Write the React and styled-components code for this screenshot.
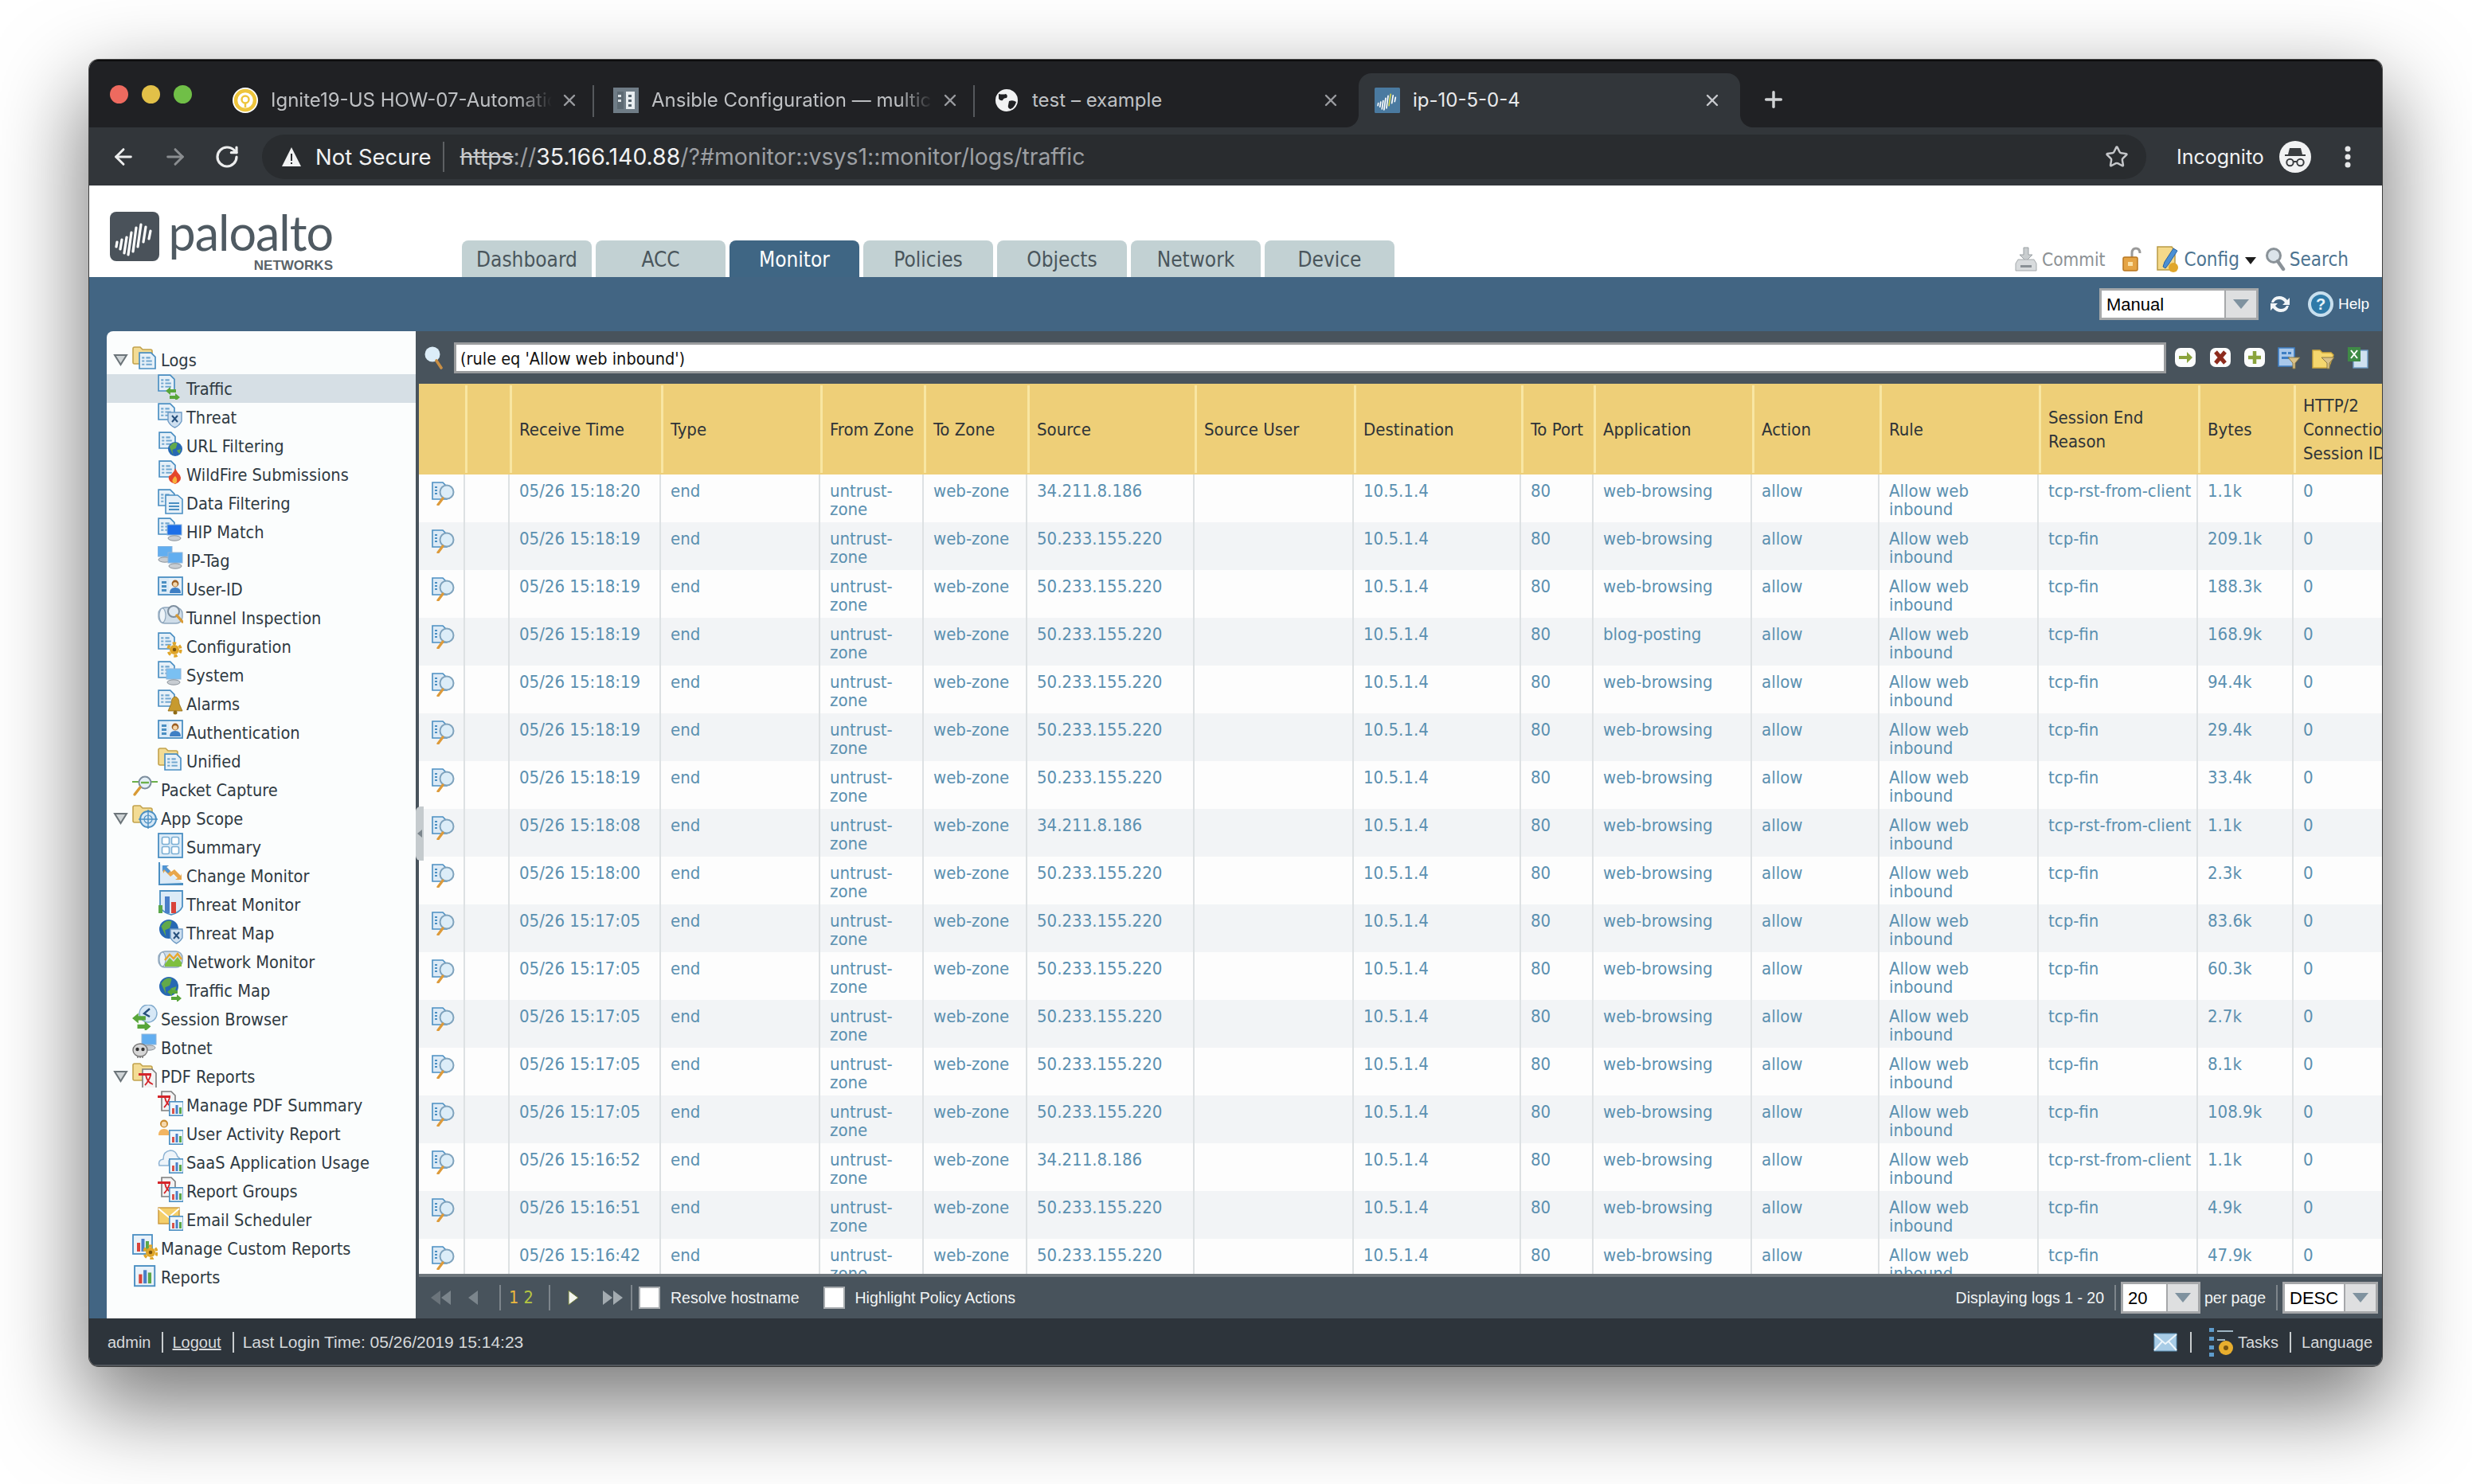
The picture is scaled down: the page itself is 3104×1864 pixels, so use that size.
import React from "react";
import styled, { createGlobalStyle } from "styled-components";
import { ArrowLeft, ArrowRight, RotateCw, X, Star, Plus } from "lucide-react";

const UI = '"DejaVu Sans Condensed", "DejaVu Sans", sans-serif';
const CHROME = 'Inter, "Liberation Sans", sans-serif';
const LABEL = '"Liberation Sans", Arial, sans-serif';

const Global = createGlobalStyle`
  html, body { margin: 0; padding: 0; background: #fff; }
  * { box-sizing: border-box; }
  body { font-family: ${UI}; }
`;

const Page = styled.div`
  width: 3104px;
  height: 1864px;
  padding: 75px 0 0 112px;
  overflow: hidden;
  background: #fff;
`;
const Win = styled.div`
  width: 2879px;
  height: 1641px;
  display: flex;
  flex-direction: column;
  border-radius: 12px;
  overflow: hidden;
  box-shadow: 0 0 0 1px rgba(20, 20, 20, 0.75), 0 44px 110px 8px rgba(0, 0, 0, 0.52);
`;

/* ---------- browser chrome ---------- */
const TabStrip = styled.div`
  height: 85px;
  flex: none;
  background: #202124;
  border-top: 2px solid #0c0c0d;
  display: flex;
  align-items: flex-end;
  padding-left: 26px;
`;
const Lights = styled.div`
  display: flex;
  gap: 17px;
  width: 134px;
  align-self: flex-start;
  margin-top: 30px;
`;
const Light = styled.span`
  width: 23px;
  height: 23px;
  border-radius: 50%;
  background: ${(p) => p.$c};
`;
const Tab = styled.div`
  position: relative;
  width: ${(p) => p.$w || 478}px;
  height: 68px;
  flex: none;
  display: flex;
  align-items: center;
  padding: 0 23px 0 20px;
  color: ${(p) => (p.$active ? "#e9eaec" : "#bfc1c4")};
  font: 400 24px/32px ${CHROME};
  background: ${(p) => (p.$active ? "#32363a" : "transparent")};
  border-radius: 16px 16px 0 0;
  &::after {
    content: "";
    position: absolute;
    display: ${(p) => (p.$sep ? "block" : "none")};
    right: 4px;
    top: 15px;
    bottom: 13px;
    width: 2px;
    background: #55585c;
  }
`;
const Flare = styled.span`
  position: absolute;
  bottom: 0;
  width: 16px;
  height: 16px;
  ${(p) =>
    p.$side === "left"
      ? "left:-16px;background:radial-gradient(circle at 0 0,transparent 15.5px,#32363a 16.5px);"
      : "right:-16px;background:radial-gradient(circle at 100% 0,transparent 15.5px,#32363a 16.5px);"}
`;
const TabTitle = styled.span`
  margin-left: 16px;
  flex: 1;
  min-width: 0;
  white-space: nowrap;
  overflow: hidden;
  ${(p) =>
    p.$fade &&
    `-webkit-mask-image: linear-gradient(90deg,#000 88%,transparent 100%);mask-image: linear-gradient(90deg,#000 88%,transparent 100%);`}
`;
const TabClose = styled.span`
  margin-left: 10px;
  display: flex;
  color: ${(p) => (p.$active ? "#c8cacd" : "#9a9ca0")};
`;
const NewTab = styled.span`
  display: flex;
  margin: 0 0 19px 26px;
  color: #d0d2d4;
`;
const Toolbar = styled.div`
  height: 73px;
  flex: none;
  background: #32363a;
  display: flex;
  align-items: center;
  padding-left: 27px;
`;
const NavBtn = styled.span`
  width: 32px;
  margin-right: ${(p) => p.$mr ?? 33}px;
  display: flex;
  justify-content: center;
  color: ${(p) => (p.$dim ? "#8a8d90" : "#eceded")};
`;
const Omni = styled.div`
  width: 2366px;
  height: 56px;
  background: #292c2f;
  border-radius: 28px;
  display: flex;
  align-items: center;
  padding: 0 22px 0 24px;
  flex: none;
  font: 400 27.5px/32px ${CHROME};
`;
const NotSecure = styled.span`
  color: #f1f2f3;
  margin-left: 17px;
  white-space: nowrap;
`;
const OmniSep = styled.span`
  width: 2px;
  height: 38px;
  background: #5d6063;
  margin: 0 20px 0 14px;
`;
const Url = styled.span`
  flex: 1;
  color: #9c9fa3;
  white-space: nowrap;
  font-size: 28.4px;
`;
const Scheme = styled.span`
  color: #c8cacc;
  text-decoration: line-through;
`;
const Host = styled.span`
  color: #f1f2f3;
`;
const Incog = styled.span`
  margin-left: 38px;
  color: #f1f2f3;
  font: 400 25px/32px ${CHROME};
`;
const IncogIcon = styled.svg`
  margin-left: 19px;
  width: 40px;
  height: 40px;
`;
const Dots = styled.svg`
  margin-left: 42px;
  width: 8px;
  height: 28px;
`;

/* ---------- app header ---------- */
const AppHead = styled.div`
  height: 115px;
  flex: none;
  background: #fff;
  display: flex;
  align-items: flex-end;
  padding: 0 42px 0 26px;
`;
const Logo = styled.div`
  width: 442px;
  height: 100%;
  flex: none;
  display: flex;
  padding-top: 33px;
`;
const LogoWords = styled.div`
  margin-left: 14px;
  display: flex;
  flex-direction: column;
  align-items: flex-end;
  width: 204px;
`;
const LogoName = styled.span`
  font: 400 61px/52px Lato, "Open Sans", sans-serif;
  color: #4f5a62;
  letter-spacing: -1px;
`;
const LogoSub = styled.span`
  font: 700 17px/14px ${LABEL};
  color: #5a6369;
  margin-top: 9px;
`;
const NavTabs = styled.div`
  display: flex;
  gap: 5px;
`;
const NavTab = styled.div`
  width: 163px;
  height: 46px;
  border-radius: 8px 8px 0 0;
  background: ${(p) => (p.$active ? "#3f6684" : "#c2d1d3")};
  color: ${(p) => (p.$active ? "#fff" : "#4a565c")};
  font: 400 26px/48px ${UI};
  text-align: center;
`;
const HeadTools = styled.div`
  margin-left: auto;
  height: 46px;
  padding-top: 2px;
  display: flex;
  align-items: center;
`;
const HeadLink = styled.span`
  font: 400 ${(p) => p.$size || 24}px/30px ${UI};
  color: ${(p) => p.$c};
  margin-left: ${(p) => p.$ml || 0}px;
`;
const ToolIcon = styled.svg`
  flex: none;
  margin-left: ${(p) => p.$ml || 0}px;
  margin-right: ${(p) => p.$mr || 0}px;
`;
const Caret = styled.span`
  margin: 2px 0 0 7px;
  border-left: 7px solid transparent;
  border-right: 7px solid transparent;
  border-top: 9px solid #1c1c1c;
`;

/* ---------- blue bar ---------- */
const BlueBar = styled.div`
  height: 68px;
  flex: none;
  background: #426583;
  display: flex;
  align-items: center;
  justify-content: flex-end;
  padding-right: 16px;
`;
const SelectBox = styled.div`
  width: ${(p) => p.$w}px;
  height: 40px;
  margin-left: ${(p) => p.$ml || 0}px;
  flex: none;
  display: flex;
  background: #dedfe0;
  border: 3px solid #a6a8aa;
`;
const SelectValue = styled.span`
  flex: 1;
  background: #fff;
  color: #000;
  font: 400 22px/36px ${LABEL};
  padding-left: 6px;
  border-right: 2px solid #a6a8aa;
`;
const SelectArrow = styled.span`
  width: ${(p) => p.$w || 38}px;
  display: flex;
  align-items: center;
  justify-content: center;
  &::before {
    content: "";
    border-left: 10px solid transparent;
    border-right: 10px solid transparent;
    border-top: 12px solid #7f929f;
  }
`;
const HelpText = styled.span`
  color: #fff;
  font: 400 19px/28px ${LABEL};
  margin-left: 5px;
`;

/* ---------- body ---------- */
const Body = styled.div`
  position: relative;
  flex: 1;
  min-height: 0;
  display: flex;
  background: #426583;
  padding-left: 22px;
`;
const Side = styled.nav`
  width: 388px;
  flex: none;
  background: #fbfdfd;
  border-top-left-radius: 8px;
  padding-top: 18px;
  overflow: hidden;
`;
const TreeRow = styled.div`
  height: 36px;
  display: flex;
  align-items: flex-start;
  padding-left: ${(p) => (p.$child ? 64 : 8)}px;
  background: ${(p) => (p.$selected ? "#d6dfe5" : "transparent")};
`;
const Toggle = styled.svg`
  width: 24px;
  height: 36px;
  flex: none;
`;
const TreeIcon = styled.svg`
  width: 32px;
  height: 32px;
  flex: none;
`;
const TreeLabel = styled.span`
  margin-left: 4px;
  font: 400 21.6px/37px ${UI};
  color: #2f3a42;
  white-space: nowrap;
`;
const Main = styled.main`
  flex: 1;
  min-width: 0;
  border-left: 4px solid #48535c;
  display: flex;
  flex-direction: column;
  background: #fff;
`;
const Handle = styled.div`
  position: absolute;
  left: 410px;
  top: 597px;
  width: 10px;
  height: 68px;
  border-radius: 6px 0 0 6px;
  background: #c5cbce;
  display: flex;
  align-items: center;
  justify-content: center;
  &::before {
    content: "";
    border-top: 5px solid transparent;
    border-bottom: 5px solid transparent;
    border-right: 6px solid #7b858c;
  }
`;
const FilterBar = styled.div`
  height: 66px;
  flex: none;
  background: #48535c;
  display: flex;
  align-items: center;
  padding-left: 7px;
`;
const FilterInput = styled.div`
  width: 2150px;
  height: 39px;
  margin: 0 9px 0 13px;
  flex: none;
  background: #fff;
  border: 3px solid #9a9c9e;
  color: #111;
  font: 400 21.5px/35px ${UI};
  padding-left: 5px;
`;
const FilterBtn = styled.svg`
  width: 30px;
  height: 30px;
  flex: none;
  margin-left: ${(p) => p.$ml || 0}px;
`;
const TableWrap = styled.div`
  flex: 1;
  min-height: 0;
  overflow: hidden;
`;
const COLS = "58px 56px 190px 200px 130px 130px 210px 200px 210px 91px 199px 160px 200px 200px 120px 120px";
const HeadRow = styled.div`
  display: grid;
  grid-template-columns: ${COLS};
  height: 114px;
  background: #eecf78;
`;
const HeadCell = styled.div`
  position: relative;
  display: flex;
  align-items: center;
  padding: 2px 0 0 12px;
  font: 400 22px/30px ${UI};
  color: #2e3438;
  white-space: pre-line;
  &::after {
    content: "";
    position: absolute;
    right: -3px;
    top: 2px;
    bottom: 2px;
    width: 3px;
    background: #f8e6a2;
  }
`;
const DataRow = styled.div`
  display: grid;
  grid-template-columns: ${COLS};
  height: 60px;
  background: ${(p) => (p.$even ? "#f2f4f6" : "#fdfdfd")};
`;
const Cell = styled.div`
  padding: 9px 6px 0 12px;
  font: 400 22px/23px ${UI};
  color: #5b90b0;
  border-right: 2px solid #dde1e3;
  overflow: hidden;
`;
const IconCell = styled(Cell)`
  padding: 9px 0 0 16px;
`;
const DetailIcon = styled.svg`
  width: 30px;
  height: 30px;
  display: block;
`;
const Pager = styled.div`
  height: 56px;
  flex: none;
  background: #48535c;
  border-top: 4px solid #6f777d;
  display: flex;
  align-items: center;
  padding: 0 5px 0 8px;
  color: #f1f3f4;
  font: 400 19.5px/28px ${LABEL};
`;
const PageBtn = styled.svg`
  width: ${(p) => p.$w}px;
  height: 30px;
  flex: none;
`;
const PagerSep = styled.span`
  width: 2px;
  height: 32px;
  flex: none;
  background: #7d858b;
  margin-left: ${(p) => p.$ml || 0}px;
`;
const PageNums = styled.span`
  width: 60px;
  padding-left: 10px;
  font: 400 21.5px/28px ${UI};
  white-space: nowrap;
  flex: none;
`;
const Num = styled.span`
  color: ${(p) => p.$c};
`;
const Check = styled.span`
  width: 27px;
  height: 28px;
  flex: none;
  background: #fff;
  border: 2px solid #a9adb0;
  margin-left: ${(p) => p.$ml}px;
  margin-right: 13px;
`;
const PagerRight = styled.div`
  margin-left: auto;
  display: flex;
  align-items: center;
`;
const PagerText = styled.span`
  margin-left: ${(p) => p.$ml || 0}px;
  margin-right: ${(p) => p.$mr || 0}px;
  white-space: nowrap;
`;

/* ---------- footer ---------- */
const Foot = styled.footer`
  height: 60px;
  flex: none;
  background: #2d343b;
  border-bottom: 2px solid #52575c;
  display: flex;
  align-items: center;
  padding: 2px 12px 0 23px;
  color: #d6d9db;
  font: 400 20px/28px ${LABEL};
`;
const FootSep = styled.span`
  width: 2px;
  height: 26px;
  background: #c8ccce;
  flex: none;
  margin: 0 ${(p) => p.$r ?? 11}px 0 ${(p) => p.$l ?? 14}px;
`;
const FootLink = styled.span`
  text-decoration: underline;
`;
const LastLogin = styled.span`
  font-size: 21px;
`;
const FootRight = styled.div`
  margin-left: auto;
  display: flex;
  align-items: center;
`;

/* ---------- drawings ---------- */
const LogoMark = ({ size = 62, bg = "#4a525a", accent = "#fff", radius = 8 }) => {
  const lines = [
    [9, 38, 8, 44],
    [15, 35, 13, 47],
    [21, 32, 18, 52],
    [27, 26, 23, 54],
    [33, 20, 29, 50],
    [39, 16, 35, 44],
    [45, 19, 42, 38],
    [51, 24, 49, 34],
  ];
  return (
    <svg width={size} height={size} viewBox="0 0 62 62" style={{ flex: "none" }}>
      <rect width="62" height="62" rx={radius} fill={bg} />
      {lines.map((l, i) => (
        <line key={i} x1={l[0]} y1={l[1]} x2={l[2]} y2={l[3]} stroke={i === 5 && accent !== "#fff" ? accent : "#fff"} strokeWidth="3.2" strokeLinecap="round" />
      ))}
    </svg>
  );
};

const Bars = ({ x = 0, y = 0, s = 1, frame = true }) => (
  <g transform={`translate(${x} ${y}) scale(${s})`}>
    {frame && <rect x=".8" y=".8" width="17.4" height="17.4" fill="#eef6fb" stroke="#4b8fc2" strokeWidth="1.6" />}
    <rect x="4" y="9" width="3" height="7" fill="#d9534a" />
    <rect x="8.5" y="5" width="3" height="11" fill="#4a7fc9" />
    <rect x="13" y="8" width="3" height="8" fill="#5aa84a" />
  </g>
);
const Doc = ({ x = 0, y = 0, s = 1, accent = "#4b8fc2" }) => (
  <g transform={`translate(${x} ${y}) scale(${s})`}>
    <path d="M1 1h14l5 5v14H1z" fill="#e6f0f8" stroke={accent} strokeWidth="1.6" />
    <path d="M4 6h3v2H4zM9 6h5v2H9zM4 10h3v2H4zM9 10h7v2H9zM4 14h3v2H4zM9 14h7v2H9z" fill={accent} opacity=".75" />
  </g>
);
const Folder = () => (
  <path d="M1 4q0-2 2-2h7l3 3h10q2 0 2 2v16H3q-2 0-2-2z" fill="#f3dc95" stroke="#c2a24c" strokeWidth="1.6" />
);
const Globe = ({ x, y, r }) => (
  <g>
    <circle cx={x} cy={y} r={r} fill="#2768b3" />
    <path d={`M${x - r * 0.8} ${y - r * 0.3}q${r * 0.5} ${-r * 0.8} ${r * 1.1} ${-r * 0.5}l${-r * 0.2} ${r * 0.7}l${-r * 0.5} ${r * 0.2}l${r * 0.1} ${r * 0.7}z`} fill="#62a94a" />
    <path d={`M${x + r * 0.2} ${y + r * 0.2}l${r * 0.6} ${-r * 0.2}l${-r * 0.2} ${r * 0.7}z`} fill="#62a94a" />
  </g>
);
const Gear = ({ x, y, r, c = "#e0a62a" }) => (
  <g>
    <circle cx={x} cy={y} r={r * 0.75} fill={c} />
    <circle cx={x} cy={y} r={r} fill="none" stroke={c} strokeWidth={r * 0.42} strokeDasharray={`${r * 0.55} ${r * 0.55}`} />
    <circle cx={x} cy={y} r={r * 0.28} fill="#7a5510" />
  </g>
);
const Arrows = ({ x = 0, y = 0 }) => (
  <g transform={`translate(${x} ${y})`} fill="#58a63a">
    <path d="M0 5l6-5v3h7v4H6v3z" />
    <path d="M18 13l-6-5v3H5v4h7v3z" />
  </g>
);
const Pdf = ({ x = 0, y = 0, s = 1 }) => (
  <g transform={`translate(${x} ${y}) scale(${s})`}>
    <path d="M5 1h12l5 5v19H5z" fill="#f3f3f3" stroke="#7c7c7c" strokeWidth="1.6" />
    <path d="M0 6h16v3H0z" fill="#d4252a" />
    <path d="M9 8c1 6 3 10 9 12M15 9c-2 6-4 9-7 12" fill="none" stroke="#d4252a" strokeWidth="1.8" />
  </g>
);
const Person = ({ x = 0, y = 0 }) => (
  <g transform={`translate(${x} ${y})`}>
    <circle cx="7" cy="5.5" r="5" fill="#c98b2f" />
    <circle cx="7" cy="6" r="3.2" fill="#f6d9ae" />
    <path d="M0 20q0-8 7-8t7 8z" fill="#f2b562" />
  </g>
);
const Card = () => (
  <g>
    <rect x="1" y="3" width="30" height="22" fill="#dcebf7" stroke="#4b8fc2" strokeWidth="1.8" />
    <path d="M5 8h6v3H5zM5 13h6v3H5zM5 18h6v3H5z" fill="#4b8fc2" />
    <path d="M14 4h16v20H14z" fill="#e8f1f8" />
    <circle cx="22" cy="11" r="4.4" fill="#9c5d20" />
    <circle cx="22" cy="12" r="2.8" fill="#f4d7ab" />
    <path d="M15 23q0-7 7-7t7 7z" fill="#3f7fc4" />
  </g>
);
const Pipe = () => (
  <g>
    <rect x="1" y="5" width="30" height="20" rx="8" fill="#cfdde9" stroke="#8fa7bd" strokeWidth="1.4" />
    <ellipse cx="6" cy="15" rx="4" ry="9" fill="#eef4f9" stroke="#8fa7bd" strokeWidth="1.2" />
  </g>
);
const Screen = ({ x = 0, y = 0, c = "#3f8fe8" }) => (
  <g transform={`translate(${x} ${y})`}>
    <rect x="0" y="0" width="18" height="13" fill={c} stroke="#8fb4d8" />
    <ellipse cx="9" cy="17" rx="8" ry="3.2" fill="#c8cdd2" stroke="#8a929a" />
  </g>
);
const Chart = ({ x = 0, y = 0, s = 1 }) => (
  <g transform={`translate(${x} ${y}) scale(${s})`}>
    <rect x="1" y="1" width="24" height="24" fill="#e9f2f9" stroke="#4b8fc2" strokeWidth="1.8" />
    <rect x="6" y="11" width="4" height="11" fill="#d9433a" />
    <rect x="11.5" y="6" width="4" height="16" fill="#4a7fc9" />
    <rect x="17" y="9" width="4" height="13" fill="#5aa84a" />
  </g>
);

const glyphs = {
  logs: <><Folder /><Doc x={8} y={8} s={1.05} /></>,
  traffic: <><Doc s={1.05} /><Arrows x={10} y={16} /></>,
  threat: <><Doc s={1.05} /><path d="M13 12h17v11q-3 6-8.500 8-5.500-2-8.500-8z" fill="#cfe0f0" stroke="#6d9ac4" strokeWidth="1.4" /><path d="M18 16l7 8M25 16l-7 8" stroke="#27507c" strokeWidth="2" /></>,
  url: <><Doc s={1.05} x={1} /><Globe x={22} y={22} r={9} /></>,
  wildfire: <><Doc s={1.05} x={1} /><path d="M22 10q2 5 6 9 4 7-6 11-10-3-8-10 3-1 4-3 3-3 4-7z" fill="#e4462c" /><path d="M22 20q4 4 1 9h-3q-4-4 2-9z" fill="#f7b23c" /></>,
  data: <><Doc s={1.05} /><path d="M10 8h15l6 5v18H10z" fill="#e6f0f8" stroke="#4b8fc2" strokeWidth="1.6" /><path d="M14 17h13v2H14zM14 21h13v2H14zM14 25h13v2H14z" fill="#4b8fc2" /></>,
  hip: <><Doc s={1.05} /><Screen x={12} y={9} c="#1d6fe8" /></>,
  iptag: <><Screen x={0} y={0} c="#62aef0" /><Screen x={13} y={8} c="#62aef0" /></>,
  user: <Card />,
  tunnel: <><Pipe /><circle cx="20" cy="10" r="7" fill="#dfe9f2" stroke="#7d8e9e" strokeWidth="2" /><path d="M24 15l7 8" stroke="#d89a35" strokeWidth="3.4" strokeLinecap="round" /></>,
  config: <><Doc s={1.05} /><Gear x={21} y={22} r={8} /></>,
  system: <><Doc s={1.05} /><Screen x={11} y={10} c="#7ac0f2" /></>,
  alarms: <><Doc s={1.05} /><path d="M22 9q5 1 5 9l4 9H13l4-9q0-8 5-9z" fill="#c79a2e" stroke="#8f6b17" strokeWidth=".8" /><circle cx="22" cy="29" r="2.500" fill="#8f6b17" /></>,
  unified: <><Folder /><Doc x={8} y={8} s={1.05} /></>,
  packet: <><path d="M0 8h32" stroke="#6bb04a" strokeWidth="2" /><circle cx="16" cy="9" r="7.500" fill="#e5f0f7" stroke="#7d8e9e" strokeWidth="2" /><path d="M11 9h10" stroke="#6bb04a" strokeWidth="2.400" /><path d="M10 15l-7 9" stroke="#d89a35" strokeWidth="3.400" strokeLinecap="round" /></>,
  appscope: <><Folder /><circle cx="20" cy="19" r="10" fill="#d6e8f6" stroke="#4b8fc2" strokeWidth="1.800" /><path d="M20 7v24M8 19h24" stroke="#4b8fc2" strokeWidth="1.400" /><circle cx="20" cy="19" r="5" fill="none" stroke="#4b8fc2" strokeWidth="1.200" /></>,
  summary: <><rect x="1" y="1" width="30" height="30" fill="#dcebf7" stroke="#4b8fc2" strokeWidth="1.800" /><rect x="5.500" y="5.500" width="9" height="9" rx="2" fill="#fff" stroke="#7aaed4" strokeWidth="1.600" /><rect x="17.500" y="5.500" width="9" height="9" rx="2" fill="#fff" stroke="#7aaed4" strokeWidth="1.600" /><rect x="5.500" y="17.500" width="9" height="9" rx="2" fill="#fff" stroke="#7aaed4" strokeWidth="1.600" /><rect x="17.500" y="17.500" width="9" height="9" rx="2" fill="#fff" stroke="#7aaed4" strokeWidth="1.600" /></>,
  change: <><path d="M1 1h2v26h29v3H1z" fill="#4b8fc2" /><path d="M3 28V3l28 24z" fill="#dcebf7" /><path d="M6 5h8l-3 2 6 6 4-3 8 8 1-3v8h-8l3-2-5-5-4 3-7-7-2 3z" fill="#e8a64a" /><path d="M6 5h8l-3 2 5 5-3 3-5-5-2 3z" fill="#4f94d4" /></>,
  threatmon: <><path d="M3 1h28v20q-3 7-14 10Q6 28 3 21z" fill="#dcebf7" stroke="#4b8fc2" strokeWidth="1.800" /><rect x="1" y="19" width="5" height="10" fill="#5aa84a" /><rect x="9" y="8" width="6" height="21" fill="#4a7fc9" /><rect x="17" y="15" width="6" height="14" fill="#d9433a" /></>,
  threatmap: <><Globe x={14} y={13} r={12} /><path d="M16 13h15v11q-3 5-7.500 7-4.500-2-7.500-7z" fill="#cfe0f0" stroke="#6d9ac4" strokeWidth="1.400" /><path d="M20 17l7 8M27 17l-7 8" stroke="#27507c" strokeWidth="2" /></>,
  netmon: <><Pipe /><path d="M9 21l6-8 5 5 5-6 5 7v5H9z" fill="#7fbf3f" /><path d="M9 16l6-7 5 5 5-6 5 7" fill="none" stroke="#e8a62a" strokeWidth="2.400" /></>,
  trafmap: <><Globe x={14} y={13} r={12} /><Arrows x={12} y={15} /></>,
  session: <><circle cx="20" cy="11" r="11" fill="#d7e8f6" stroke="#7fa9cc" strokeWidth="1.400" /><path d="M22 5l-7 6 7 4" fill="none" stroke="#27507c" strokeWidth="2.400" /><g transform="scale(1.3)"><Arrows x={0} y={8} /></g></>,
  botnet: <><Screen x={12} y={1} c="#62aef0" /><ellipse cx="10" cy="21" rx="9" ry="8" fill="#d6d6d6" stroke="#777" strokeWidth="1.400" /><circle cx="6.500" cy="20" r="2.200" fill="#333" /><circle cx="13.500" cy="20" r="2.200" fill="#333" /><path d="M7 28v3M10 28v3M13 28v3" stroke="#777" strokeWidth="1.500" /></>,
  pdf: <><Folder /><Pdf x={8} y={8} s={1} /></>,
  managepdf: <><Pdf s={1} /><Bars x={14} y={13} /></>,
  useract: <><Person x={1} y={0} /><Bars x={14} y={13} /></>,
  saas: <><path d="M2 22q-2-7 5-8 0-10 9-11 7 0 9 8 3 1 3 5H14v6z" fill="#eef4f9" stroke="#8fb4d4" strokeWidth="1.500" /><Bars x={14} y={13} /></>,
  groups: <><Pdf s={1} /><Bars x={14} y={13} /></>,
  email: <><rect x="1" y="3" width="26" height="20" fill="#f4cf6b" stroke="#c9963a" strokeWidth="1.400" /><path d="M1 4l13 11L27 4" fill="none" stroke="#fff" strokeWidth="2" /><Bars x={14} y={13} /></>,
  custom: <><Chart s={1} /><Gear x={23} y={23} r={8} /></>,
  reports: <Chart x={2} y={3} s={1.05} />,
};

const tree = [
  ["Logs", "logs", 0, 1],
  ["Traffic", "traffic", 1, 0, 1],
  ["Threat", "threat", 1],
  ["URL Filtering", "url", 1],
  ["WildFire Submissions", "wildfire", 1],
  ["Data Filtering", "data", 1],
  ["HIP Match", "hip", 1],
  ["IP-Tag", "iptag", 1],
  ["User-ID", "user", 1],
  ["Tunnel Inspection", "tunnel", 1],
  ["Configuration", "config", 1],
  ["System", "system", 1],
  ["Alarms", "alarms", 1],
  ["Authentication", "user", 1],
  ["Unified", "unified", 1],
  ["Packet Capture", "packet", 0],
  ["App Scope", "appscope", 0, 1],
  ["Summary", "summary", 1],
  ["Change Monitor", "change", 1],
  ["Threat Monitor", "threatmon", 1],
  ["Threat Map", "threatmap", 1],
  ["Network Monitor", "netmon", 1],
  ["Traffic Map", "trafmap", 1],
  ["Session Browser", "session", 0],
  ["Botnet", "botnet", 0],
  ["PDF Reports", "pdf", 0, 1],
  ["Manage PDF Summary", "managepdf", 1],
  ["User Activity Report", "useract", 1],
  ["SaaS Application Usage", "saas", 1],
  ["Report Groups", "groups", 1],
  ["Email Scheduler", "email", 1],
  ["Manage Custom Reports", "custom", 0],
  ["Reports", "reports", 0],
];

const A = "34.211.8.186";
const B = "50.233.155.220";
const R = "tcp-rst-from-client";
const F = "tcp-fin";
const W = "web-browsing";
const rows = [
  ["15:18:20", A, W, R, "1.1k"],
  ["15:18:19", B, W, F, "209.1k"],
  ["15:18:19", B, W, F, "188.3k"],
  ["15:18:19", B, "blog-posting", F, "168.9k"],
  ["15:18:19", B, W, F, "94.4k"],
  ["15:18:19", B, W, F, "29.4k"],
  ["15:18:19", B, W, F, "33.4k"],
  ["15:18:08", A, W, R, "1.1k"],
  ["15:18:00", B, W, F, "2.3k"],
  ["15:17:05", B, W, F, "83.6k"],
  ["15:17:05", B, W, F, "60.3k"],
  ["15:17:05", B, W, F, "2.7k"],
  ["15:17:05", B, W, F, "8.1k"],
  ["15:17:05", B, W, F, "108.9k"],
  ["15:16:52", A, W, R, "1.1k"],
  ["15:16:51", B, W, F, "4.9k"],
  ["15:16:42", B, W, F, "47.9k"],
];
const headers = ["", "", "Receive Time", "Type", "From Zone", "To Zone", "Source", "Source User", "Destination", "To Port", "Application", "Action", "Rule", "Session End\nReason", "Bytes", "HTTP/2\nConnection\nSession ID"];

const DetailGlyph = () => (
  <DetailIcon viewBox="0 0 30 30">
    <path d="M1 1h13l5 5v16H1z" fill="#dceaf6" stroke="#4b8fc2" strokeWidth="1.6" />
    <path d="M4 6h3v2H4zM4 10h3v2H4zM4 14h3v2H4z" fill="#4b8fc2" />
    <circle cx="19" cy="13" r="8.500" fill="#dcedf8" stroke="#7fa3bd" strokeWidth="2" />
    <path d="M14 21l-6 8" stroke="#dd9a3a" strokeWidth="3.200" strokeLinecap="round" />
  </DetailIcon>
);
const Tri = ({ dir = 1, c, x = 0 }) => (
  <path d={dir > 0 ? `M${x} 6l12 9-12 9z` : `M${x + 12} 6l-12 9 12 9z`} fill={c} />
);

export default function App() {
  return (
    <Page>
      <Global />
      <Win>
        <TabStrip>
          <Lights>
            <Light $c="#ee6a5f" />
            <Light $c="#e2c048" />
            <Light $c="#70bf47" />
          </Lights>
          <Tab $sep>
            <svg width="32" height="32" viewBox="0 0 32 32" style={{ flex: "none" }}>
              <circle cx="16" cy="16" r="16" fill="#fff" />
              <circle cx="16" cy="16" r="12" fill="none" stroke="#eec53c" strokeWidth="4.500" />
              <circle cx="16" cy="15" r="4.500" fill="none" stroke="#eec53c" strokeWidth="2.500" />
              <path d="M16 19v6" stroke="#eec53c" strokeWidth="2.500" />
            </svg>
            <TabTitle $fade>Ignite19-US HOW-07-Automation</TabTitle>
            <TabClose><X size={24} strokeWidth={2.4} /></TabClose>
          </Tab>
          <Tab $sep>
            <svg width="32" height="32" viewBox="0 0 32 32" style={{ flex: "none" }}>
              <rect width="32" height="32" fill="#6f7c86" />
              <rect x="5" y="5" width="8" height="22" fill="#5c6972" />
              <rect x="16" y="5" width="11" height="22" fill="#e8edf0" />
              <path d="M6 9h4v3H6zM6 15h4v3H6z" fill="#dfe4e8" />
              <path d="M19 9h4v3h-4zM19 15h4v3h-4zM19 21h4v3h-4z" fill="#56646e" />
            </svg>
            <TabTitle $fade>Ansible Configuration — multicloud</TabTitle>
            <TabClose><X size={24} strokeWidth={2.4} /></TabClose>
          </Tab>
          <Tab>
            <svg width="28" height="28" viewBox="0 0 28 28" style={{ flex: "none", margin: "0 2px" }}>
              <circle cx="14" cy="14" r="14" fill="#f1f2f3" />
              <path d="M4 6q6 1 9 0 3 2 1 5-4 0-5 3-3 1-5-2zM17 15q5-2 9 1-2 7-7 9-4-1-3-5z" fill="#202124" />
            </svg>
            <TabTitle>test – example</TabTitle>
            <TabClose><X size={24} strokeWidth={2.4} /></TabClose>
          </Tab>
          <Tab $active $w={479}>
            <Flare $side="left" />
            <Flare $side="right" />
            <LogoMark size={32} bg="#4a7aa0" accent="#d6d64a" radius={3} />
            <TabTitle>ip-10-5-0-4</TabTitle>
            <TabClose $active><X size={24} strokeWidth={2.4} /></TabClose>
          </Tab>
          <NewTab><Plus size={32} strokeWidth={2.6} /></NewTab>
        </TabStrip>

        <Toolbar>
          <NavBtn><ArrowLeft size={34} strokeWidth={2.2} /></NavBtn>
          <NavBtn $dim><ArrowRight size={34} strokeWidth={2.2} /></NavBtn>
          <NavBtn $mr={28}><RotateCw size={32} strokeWidth={2.4} /></NavBtn>
          <Omni>
            <svg width="26" height="26" viewBox="0 0 26 26" style={{ flex: "none" }}>
              <path d="M13 1l12 24H1z" fill="#f1f2f3" />
              <path d="M12 9h2v9h-2zM12 20h2v2h-2z" fill="#292c2f" />
            </svg>
            <NotSecure>Not Secure</NotSecure>
            <OmniSep />
            <Url>
              <Scheme>https</Scheme>://<Host>35.166.140.88</Host>/?#monitor::vsys1::monitor/logs/traffic
            </Url>
            <Star size={30} color="#c4c6c9" strokeWidth={2} />
          </Omni>
          <Incog>Incognito</Incog>
          <IncogIcon viewBox="0 0 40 40">
            <circle cx="20" cy="20" r="20" fill="#f1f2f3" />
            <path d="M13 9h14l2 8h4v2H7v-2h4z" fill="#3a3d40" />
            <circle cx="13.500" cy="27" r="4.200" fill="none" stroke="#3a3d40" strokeWidth="2" />
            <circle cx="26.500" cy="27" r="4.200" fill="none" stroke="#3a3d40" strokeWidth="2" />
            <path d="M17.500 26h5" stroke="#3a3d40" strokeWidth="2" />
          </IncogIcon>
          <Dots viewBox="0 0 8 28">
            <circle cx="4" cy="4" r="3.500" fill="#e6e7e8" />
            <circle cx="4" cy="14" r="3.500" fill="#e6e7e8" />
            <circle cx="4" cy="24" r="3.500" fill="#e6e7e8" />
          </Dots>
        </Toolbar>

        <AppHead>
          <Logo>
            <LogoMark size={62} />
            <LogoWords>
              <LogoName>paloalto</LogoName>
              <LogoSub>NETWORKS</LogoSub>
            </LogoWords>
          </Logo>
          <NavTabs>
            {["Dashboard", "ACC", "Monitor", "Policies", "Objects", "Network", "Device"].map((t) => (
              <NavTab key={t} $active={t === "Monitor"}>{t}</NavTab>
            ))}
          </NavTabs>
          <HeadTools>
            <ToolIcon width="28" height="32" viewBox="0 0 28 32" $mr={6}>
              <path d="M11 1h6v9h5l-8 8-8-8h5z" fill="#c9cdcf" stroke="#9aa0a4" />
              <path d="M4 16h20l3 5v9H1v-9z" fill="#d8dbdd" stroke="#a4a9ac" />
              <rect x="7" y="23" width="14" height="3" fill="#8a9095" />
            </ToolIcon>
            <HeadLink $c="#8c9194" $size={22.5}>Commit</HeadLink>
            <ToolIcon width="26" height="32" viewBox="0 0 26 32" $ml={20} $mr={3}>
              <path d="M13 14V8q0-6 5-6t5 6" fill="none" stroke="#9a9a9a" strokeWidth="3" />
              <rect x="2" y="13" width="18" height="17" rx="2" fill="#e5a445" stroke="#b8761f" strokeWidth="1.500" />
              <rect x="8" y="19" width="6" height="5" fill="#fbe2a8" />
            </ToolIcon>
            <ToolIcon width="30" height="36" viewBox="0 0 30 36" $ml={14} $mr={6}>
              <path d="M2 2h18l4 5v24H2z" fill="#f4d98a" stroke="#b99a45" strokeWidth="1.500" />
              <path d="M22 4l5 3-11 17-4 5-3-2 2-6z" fill="#4b8fd4" stroke="#2b629f" />
              <circle cx="22" cy="28" r="6" fill="#e0a62a" />
            </ToolIcon>
            <HeadLink $c="#4d7491">Config</HeadLink>
            <Caret />
            <ToolIcon width="26" height="34" viewBox="0 0 26 34" $ml={11} $mr={5}>
              <circle cx="11" cy="12" r="8.500" fill="#dbe4ea" stroke="#8a9298" strokeWidth="3" />
              <path d="M16 19l7 10" stroke="#8a9298" strokeWidth="4.500" strokeLinecap="round" />
            </ToolIcon>
            <HeadLink $c="#4d7491">Search</HeadLink>
          </HeadTools>
        </AppHead>

        <BlueBar>
          <SelectBox $w={200}>
            <SelectValue>Manual</SelectValue>
            <SelectArrow />
          </SelectBox>
          <ToolIcon width="28" height="26" viewBox="0 0 28 26" $ml={13}>
            <path d="M3 11q2-8 10-8 6 0 10 5l3-3v9h-9l3-3q-3-4-7-4-5 0-7 4zM25 15q-2 8-10 8-6 0-10-5l-3 3v-9h9l-3 3q3 4 7 4 5 0 7-4z" fill="#f2f6f8" />
          </ToolIcon>
          <ToolIcon width="34" height="34" viewBox="0 0 34 34" $ml={20}>
            <circle cx="17" cy="17" r="16" fill="#c8dfee" />
            <circle cx="17" cy="17" r="12" fill="#2f7aa8" />
            <text x="17" y="24" fontSize="20" fontWeight="700" fill="#e8f3f9" textAnchor="middle" fontFamily="Liberation Sans, sans-serif">?</text>
          </ToolIcon>
          <HelpText>Help</HelpText>
        </BlueBar>

        <Body>
          <Side>
            {tree.map(([label, icon, child, open, selected]) => (
              <TreeRow key={label} $child={child} $selected={selected}>
                {!child && (
                  <Toggle viewBox="0 0 24 36">
                    {open ? <path d="M2 12h15l-7.500 12z" fill="#cfd4d6" stroke="#6c757a" strokeWidth="2" /> : null}
                  </Toggle>
                )}
                <TreeIcon viewBox="0 0 32 32">{glyphs[icon]}</TreeIcon>
                <TreeLabel>{label}</TreeLabel>
              </TreeRow>
            ))}
          </Side>
          <Main>
            <FilterBar>
              <svg width="24" height="30" viewBox="0 0 24 30" style={{ flex: "none" }}>
                <circle cx="10" cy="11" r="9.500" fill="#dcedf8" />
                <path d="M15 19l6 9" stroke="#c98f45" strokeWidth="3.600" strokeLinecap="round" />
              </svg>
              <FilterInput>(rule eq 'Allow web inbound')</FilterInput>
              <FilterBtn viewBox="0 0 30 30">
                <rect x="2" y="3" width="26" height="24" rx="7" fill="#fbfcfc" />
                <path d="M7 13h10V8l7 7-7 7v-5H7z" fill="#8aa33c" />
              </FilterBtn>
              <FilterBtn viewBox="0 0 30 30" $ml={14}>
                <rect x="2" y="3" width="26" height="24" rx="7" fill="#fbfcfc" />
                <path d="M9 8l12 14M21 8L9 22" stroke="#8c2a1c" strokeWidth="5" />
              </FilterBtn>
              <FilterBtn viewBox="0 0 30 30" $ml={13}>
                <rect x="2" y="3" width="26" height="24" rx="7" fill="#fbfcfc" />
                <path d="M15 7v16M7 15h16" stroke="#8aa33c" strokeWidth="4.500" />
              </FilterBtn>
              <FilterBtn viewBox="0 0 30 30" $ml={13}>
                <path d="M2 3h20v23H2z" fill="#a9c8ea" stroke="#3f7fc4" strokeWidth="1.600" />
                <path d="M6 8h6v3H6zM14 8h4v3h-4zM6 14h10v3H6z" fill="#3f7fc4" />
                <path d="M14 15h15l-6 7v7h-3v-7z" fill="#d9c28a" stroke="#8c7a44" />
              </FilterBtn>
              <FilterBtn viewBox="0 0 30 30" $ml={13}>
                <path d="M2 6h9l3 3h11l3 3-6 16H2z" fill="#f5d76e" stroke="#d2ac3e" strokeWidth="1.400" />
                <path d="M13 15h16l-6 7v7h-3v-7z" fill="#d9c28a" stroke="#8c7a44" />
              </FilterBtn>
              <FilterBtn viewBox="0 0 30 30" $ml={13}>
                <rect x="10" y="6" width="18" height="22" fill="#cfe0f0" stroke="#6d9ac4" strokeWidth="1.400" />
                <rect x="3" y="2" width="16" height="18" fill="#3f8a46" />
                <path d="M7 6l8 10M15 6L7 16" stroke="#fff" strokeWidth="2" />
              </FilterBtn>
            </FilterBar>
            <TableWrap>
              <HeadRow>
                {headers.map((h, i) => <HeadCell key={i}>{h}</HeadCell>)}
              </HeadRow>
              {rows.map((r, i) => (
                <DataRow key={i} $even={i % 2 === 1}>
                  <IconCell><DetailGlyph /></IconCell>
                  <Cell />
                  <Cell>05/26 {r[0]}</Cell>
                  <Cell>end</Cell>
                  <Cell>untrust-zone</Cell>
                  <Cell>web-zone</Cell>
                  <Cell>{r[1]}</Cell>
                  <Cell />
                  <Cell>10.5.1.4</Cell>
                  <Cell>80</Cell>
                  <Cell>{r[2]}</Cell>
                  <Cell>allow</Cell>
                  <Cell>Allow web inbound</Cell>
                  <Cell>{r[3]}</Cell>
                  <Cell>{r[4]}</Cell>
                  <Cell>0</Cell>
                </DataRow>
              ))}
            </TableWrap>
            <Pager>
              <PageBtn $w={40} viewBox="0 0 40 30">
                <Tri dir={-1} c="#6b747b" x={7} />
                <Tri dir={-1} c="#7b858c" x={20} />
              </PageBtn>
              <PageBtn $w={40} viewBox="0 0 40 30"><Tri dir={-1} c="#7b858c" x={14} /></PageBtn>
              <PagerSep $ml={13} />
              <PageNums><Num $c="#eab83f">1</Num> <Num $c="#b5c641">2</Num></PageNums>
              <PagerSep />
              <PageBtn $w={58} viewBox="0 0 58 30">
                <path d="M23 6l12 9-12 9z" fill="#f3f5ef" stroke="#6d7a3a" strokeWidth="1" />
              </PageBtn>
              <PageBtn $w={38} viewBox="0 0 38 30">
                <Tri c="#a3abb0" x={8} />
                <Tri c="#a3abb0" x={21} />
              </PageBtn>
              <PagerSep $ml={5} />
              <Check $ml={8} />
              <PagerText $mr={30}>Resolve hostname</PagerText>
              <Check $ml={0} />
              <PagerText>Highlight Policy Actions</PagerText>
              <PagerRight>
                <PagerText>Displaying logs 1 - 20</PagerText>
                <PagerSep $ml={13} />
                <SelectBox $w={100} $ml={6}>
                  <SelectValue>20</SelectValue>
                  <SelectArrow />
                </SelectBox>
                <PagerText $ml={5}>per page</PagerText>
                <PagerSep $ml={13} />
                <SelectBox $w={120} $ml={6}>
                  <SelectValue>DESC</SelectValue>
                  <SelectArrow />
                </SelectBox>
              </PagerRight>
            </Pager>
          </Main>
          <Handle />
        </Body>

        <Foot>
          <span>admin</span>
          <FootSep />
          <FootLink>Logout</FootLink>
          <FootSep />
          <LastLogin>Last Login Time: 05/26/2019 15:14:23</LastLogin>
          <FootRight>
            <svg width="30" height="24" viewBox="0 0 30 24">
              <rect x="1" y="1" width="28" height="22" fill="#a8cce6" stroke="#5d8fb4" />
              <path d="M1 2l14 12L29 2M1 22l10-11M29 22L19 11" fill="none" stroke="#eef6fb" strokeWidth="2" />
            </svg>
            <FootSep $l={16} $r={21} />
            <svg width="34" height="38" viewBox="0 0 34 38" style={{ marginRight: 3 }}>
              <path d="M1 1h6v5H1zM1 12h6v5H1zM1 23h6v5H1zM1 32h6v5H1z" fill="#5f9ccc" />
              <path d="M11 4h20v2H11zM11 15h10v2H11z" fill="#9fb4c2" />
              <circle cx="22" cy="26" r="9" fill="#e8ae2e" />
              <circle cx="22" cy="26" r="3" fill="#7a5510" />
            </svg>
            <span>Tasks</span>
            <FootSep $l={14} $r={13} />
            <span>Language</span>
          </FootRight>
        </Foot>
      </Win>
    </Page>
  );
}
